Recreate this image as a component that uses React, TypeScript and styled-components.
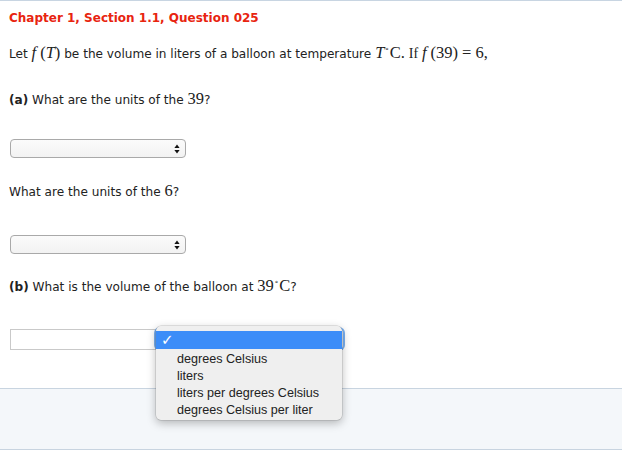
import React from "react";
import styled, { createGlobalStyle } from "styled-components";

const Global = createGlobalStyle`
  html, body { margin: 0; padding: 0; background: #ffffff; }
  body { font-family: "DejaVu Sans", Verdana, sans-serif; color: #222; }
`;

const Page = styled.div`
  border-top: 1px solid #c8d5e2;
  display: flex;
  flex-direction: column;
`;

const Content = styled.div`
  padding: 0 9px;
  display: flex;
  flex-direction: column;
`;

const Heading = styled.h1`
  margin: 9px 0 0;
  font-size: 12px;
  line-height: 16px;
  font-weight: bold;
  color: #e8240f;
`;

const Text = styled.p<{ $mt: number }>`
  margin: ${(p) => p.$mt}px 0 0;
  height: 18px;
  font-size: 12.1px;
  line-height: 18px;
  color: #222;
  white-space: nowrap;
`;

const Math = styled.span<{ $italic?: boolean }>`
  font-family: "Liberation Serif", "Times New Roman", serif;
  font-size: 16.5px;
  line-height: 1;
  font-style: ${(p) => (p.$italic ? "italic" : "normal")};
`;

const Rel = styled.span`
  padding: 0 4px;
`;

const Gap = styled.span`
  display: inline-block;
  width: 4px;
`;

const Small = styled.span`
  font-family: "Liberation Serif", "Times New Roman", serif;
  font-size: 14px;
  line-height: 1;
`;

const Deg = styled.span`
  font-family: "DejaVu Sans", sans-serif;
  font-size: 7px;
  vertical-align: 5px;
  line-height: 0;
  padding: 0 1px 0 1px;
`;

const Select = styled.div<{ $mt: number }>`
  margin: ${(p) => p.$mt}px 0 0 1px;
  width: 176px;
  height: 19px;
  box-sizing: border-box;
  border: 1px solid #a9a9a9;
  border-radius: 4px;
  background: linear-gradient(#fbfbfb, #f2f2f2);
  display: flex;
  align-items: center;
  justify-content: flex-end;
  padding-right: 5px;
`;

const AnswerRow = styled.div`
  position: relative;
  margin: 33px 0 0 1px;
  display: flex;
  height: 21px;
`;

const Input = styled.div`
  width: 146px;
  height: 21px;
  box-sizing: border-box;
  border: 1px solid #c9c9c9;
  background: #fff;
`;

const HiddenSelect = styled.div`
  width: 187px;
  height: 20px;
  box-sizing: border-box;
  border-radius: 4px;
  box-shadow: 0 0 0 2px #7ab0f0;
  background: #f2f2f2;
`;

const Popup = styled.div`
  position: absolute;
  left: 146px;
  top: -3px;
  width: 186px;
  height: 94px;
  box-sizing: border-box;
  padding-top: 5px;
  background: #efefef;
  border-radius: 5px;
  box-shadow: 0 0 0 0.5px rgba(0, 0, 0, 0.18), 0 3px 10px rgba(0, 0, 0, 0.28);
  font-family: "Liberation Sans", Arial, sans-serif;
  font-size: 12.6px;
  color: #222;
  display: flex;
  flex-direction: column;
`;

const Option = styled.div<{ $active?: boolean }>`
  height: ${(p) => (p.$active ? 18 : 17)}px;
  line-height: ${(p) => (p.$active ? 18 : 17)}px;
  padding-left: 21px;
  margin-bottom: ${(p) => (p.$active ? 2 : 0)}px;
  background: ${(p) => (p.$active ? "#3c8df8" : "transparent")};
  color: ${(p) => (p.$active ? "#fff" : "#222")};
  position: relative;
  white-space: nowrap;
`;

const Check = styled.span`
  position: absolute;
  left: 5px;
  top: 0;
  font-family: "DejaVu Sans", sans-serif;
  font-size: 15px;
  font-weight: bold;
  color: #fff;
`;

const Footer = styled.div`
  margin-top: 38px;
  height: 62px;
  box-sizing: border-box;
  border-top: 1px solid #c8d4e0;
  border-bottom: 1px solid #c8d4e0;
  background: #f4f7fa;
`;

const Arrows = () => (
  <svg width="6" height="10" viewBox="0 0 6 10">
    <path d="M3 0.5 L5.6 4 L0.4 4 Z" fill="#111" />
    <path d="M3 9.5 L5.6 6 L0.4 6 Z" fill="#111" />
  </svg>
);

export default function App() {
  return (
    <>
      <Global />
      <Page>
        <Content>
          <Heading>Chapter 1, Section 1.1, Question 025</Heading>
          <Text $mt={19}>
            Let <Math $italic>f</Math>
            <Gap />
            <Math>(</Math>
            <Math $italic>T</Math>
            <Math>)</Math> be the volume in liters of a balloon at temperature{" "}
            <Math $italic>T</Math>
            <Deg>°</Deg>
            <Math>C.</Math> <Small>If</Small> <Math $italic>f</Math>
            <Gap />
            <Math>(39)</Math>
            <Math>
              <Rel>=</Rel>6,
            </Math>
          </Text>
          <Text $mt={28}>
            <b>(a)</b> What are the units of the <Math>39</Math>?
          </Text>
          <Select $mt={30}>
            <Arrows />
          </Select>
          <Text $mt={25}>
            What are the units of the <Math>6</Math>?
          </Text>
          <Select $mt={34}>
            <Arrows />
          </Select>
          <Text $mt={24}>
            <b>(b)</b> What is the volume of the balloon at <Math>39</Math>
            <Deg>°</Deg>
            <Math>C</Math>?
          </Text>
          <AnswerRow>
            <Input />
            <HiddenSelect />
            <Popup>
              <Option $active>
                <Check>✓</Check>
              </Option>
              <Option>degrees Celsius</Option>
              <Option>liters</Option>
              <Option>liters per degrees Celsius</Option>
              <Option>degrees Celsius per liter</Option>
            </Popup>
          </AnswerRow>
        </Content>
        <Footer />
      </Page>
    </>
  );
}
